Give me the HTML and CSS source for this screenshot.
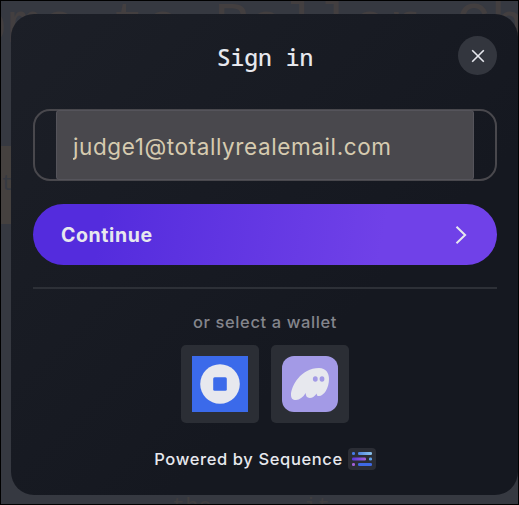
FILE: index.html
```html
<!DOCTYPE html>
<html lang="en">

<head>
    <meta charset="UTF-8">
    <title>Sign in</title>
    <link rel="stylesheet" href="styles.css">
</head>

<body>

    <!-- Page behind the modal -->
    <div class="page">
        <div class="page-title">ome to Roller Ch</div>
        <div class="page-button">t</div>
        <div class="page-text">the&nbsp;&nbsp;&nbsp;&nbsp;&nbsp;&nbsp;&nbsp;it</div>
    </div>

    <!-- Sign in modal -->
    <div class="modal">
        <div class="modal-header">
            <h1>Sign in</h1>
            <button class="close" aria-label="Close">
                <svg width="14" height="14" viewBox="0 0 14 14"><path d="M1.2 1.2l11.6 11.6M12.8 1.2L1.2 12.8"/></svg>
            </button>
        </div>

        <div class="email-field">
            <input type="email" value="judge1@totallyrealemail.com">
        </div>

        <button class="continue">
            <span>Continue</span>
            <svg width="14" height="20" viewBox="0 0 14 20"><path d="M2.5 1.7l8.6 8.3-8.6 8.3"/></svg>
        </button>

        <hr>

        <p class="wallet-label">or select a wallet</p>
        <div class="wallets">
            <button class="wallet">
                <svg width="56" height="56" viewBox="0 0 56 56">
                    <rect width="56" height="56" fill="#3b6aea"/>
                    <circle cx="28" cy="28" r="19.8" fill="#e7e8ee"/>
                    <rect x="21.2" y="21.2" width="13.6" height="13.6" rx="1.5" fill="#3b6aea"/>
                </svg>
            </button>
            <button class="wallet">
                <svg width="56" height="56" viewBox="0 0 56 56">
                    <rect width="56" height="56" rx="12" fill="#a39ae6"/>
                    <path d="M9 39c0-9 10-27 28-27 7 0 10 5 10 11 0 9-5 17-10 17-1.8 0-2.3-1-2.3-2.6-2.3 3-4.5 4.6-7 4.6-2.6 0-4-1.7-4-4.9C21 41.5 17.5 44 14 44c-3.5 0-5-2-5-5z" fill="#e7e8ee"/>
                    <ellipse cx="33.3" cy="23" rx="2.4" ry="2.8" fill="#a39ae6"/>
                    <ellipse cx="40" cy="23" rx="2.4" ry="2.8" fill="#a39ae6"/>
                </svg>
            </button>
        </div>

        <div class="powered">
            <span>Powered by Sequence</span>
            <svg width="28" height="22" viewBox="0 0 28 22">
                <defs>
                    <linearGradient id="top"><stop offset="0" stop-color="#4f83e0"/><stop offset="1" stop-color="#8cc5ee"/></linearGradient>
                    <linearGradient id="middle"><stop offset="0" stop-color="#5738df"/><stop offset="1" stop-color="#a561d9"/></linearGradient>
                </defs>
                <rect width="28" height="22" rx="4" fill="#2b2d35"/>
                <rect x="4" y="4" width="3" height="3" rx="1.3" fill="#477ce8"/>
                <rect x="10" y="4" width="14" height="3" rx="1.3" fill="url(#top)"/>
                <rect x="4" y="9.5" width="14" height="3" rx="1.3" fill="url(#middle)"/>
                <rect x="21" y="9.5" width="3" height="3" rx="1.3" fill="#5f9ee8"/>
                <rect x="4" y="15" width="3" height="3" rx="1.3" fill="#a360da"/>
                <rect x="10" y="15" width="14" height="3" rx="1.3" fill="#3f69e4"/>
            </svg>
        </div>
    </div>

</body>

</html>
```
FILE: styles.css
```css
* {
    box-sizing: border-box;
}

body {
    margin: 0;
    height: 505px;
    padding: 13px 0 0 10px;
    border: 1px solid #000;
    background: #363941;
    font-family: Inter, sans-serif;
    color: #e7e8ee;
    position: relative;
    overflow: hidden;
}

button {
    border: none;
    padding: 0;
    font: inherit;
    color: inherit;
    cursor: pointer;
}

svg {
    display: block;
}

/* dimmed page, covered by the modal */
.page {
    position: absolute;
    inset: 0;
    overflow: hidden;
    font-family: "Liberation Mono", monospace;
    color: #433f40;
    white-space: nowrap;
}

.page-title {
    position: absolute;
    left: -28px;
    top: -7px;
    font-size: 57.5px;
    line-height: 66px;
}

.page-button {
    position: absolute;
    left: 0;
    top: 145px;
    width: 60px;
    height: 78px;
    background: #45413f;
    color: #373a42;
    font-size: 22px;
    line-height: 78px;
}

.page-text {
    position: absolute;
    left: 171px;
    top: 494px;
    font-size: 22px;
    line-height: 26px;
    color: #413f40;
}

.modal {
    position: relative;
    width: 507px;
    height: 481px;
    padding: 0 21px 0 22px;
    border-radius: 23px;
    background: linear-gradient(135deg, #1c1f27, #151820 65%);
}

.modal-header {
    position: relative;
    height: 95px;
}

.modal-header h1 {
    margin: 0;
    padding-top: 27px;
    font-family: "Noto Sans Mono", "DejaVu Sans Mono", monospace;
    font-size: 23px;
    font-weight: 500;
    line-height: 32px;
    text-align: center;
}

.close {
    position: absolute;
    top: 22px;
    right: 0;
    display: flex;
    align-items: center;
    justify-content: center;
    width: 39px;
    height: 39px;
    border-radius: 50%;
    background: #33363e;
}

.close path {
    fill: none;
    stroke: #e7e8ee;
    stroke-width: 1.6;
}

.email-field {
    height: 72px;
    padding: 0 21px;
    border: 2px solid #49484d;
    border-radius: 17px;
}

.email-field input {
    display: block;
    width: 418px;
    height: 70px;
    margin-top: -1px;
    padding: 2px 16px 0;
    border: 1px solid #55545b;
    border-radius: 3px;
    background: #49484d;
    color: #d6cbb0;
    font: 22.5px Inter, sans-serif;
    letter-spacing: 0.6px;
    outline: none;
}

.continue {
    display: flex;
    align-items: center;
    justify-content: space-between;
    width: 464px;
    height: 61px;
    margin-top: 23px;
    padding: 0 29px 0 28px;
    border-radius: 31px;
    background: linear-gradient(100deg, #542cdd 15%, #7041e8 75%);
    font-size: 19.5px;
    font-weight: 700;
    letter-spacing: 0.6px;
}

.continue path {
    fill: none;
    stroke: #e7e8ee;
    stroke-width: 2;
}

hr {
    height: 2px;
    margin: 22px 0 0;
    border: none;
    background: #2d3037;
}

.wallet-label {
    margin: 23px 0 12px;
    color: #84858c;
    font-size: 16.5px;
    font-weight: 500;
    line-height: 21px;
    letter-spacing: 0.6px;
    text-align: center;
}

.wallets {
    display: flex;
    justify-content: center;
    gap: 12px;
}

.wallet {
    width: 78px;
    height: 78px;
    padding: 11px;
    border-radius: 5px;
    background: #2b2e35;
}

.powered {
    display: flex;
    align-items: center;
    justify-content: center;
    gap: 5px;
    margin-top: 25px;
    font-size: 16.5px;
    font-weight: 500;
    letter-spacing: 0.62px;
    line-height: 20px;
}
```
